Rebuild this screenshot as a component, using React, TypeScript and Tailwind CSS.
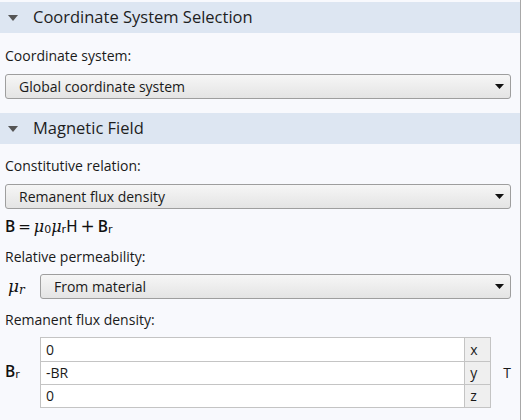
import React from 'react';

const font = { fontFamily: '"Open Sans", "Noto Sans", sans-serif' };
const sans = { fontFamily: '"DejaVu Sans", sans-serif' };
const serif = { fontFamily: '"DejaVu Serif", serif' };

function SectionHeader({ title }: { title: string }) {
    return (
        <div className="h-[31px] bg-[#dde6f2] flex items-center">
            <svg width="10" height="6" viewBox="0 0 10 6" className="ml-[8px] mr-[15px]">
                <path d="M0 0 L10 0 L5 6 Z" fill="#555" />
            </svg>
            <span className="text-[16.5px] text-[#1e1e1e]">{title}</span>
        </div>
    );
}

function Dropdown({ value }: { value: string }) {
    return (
        <div className="h-[25px] flex-1 flex items-center justify-between rounded-[3px] border border-[#9e9e9e] bg-gradient-to-b from-[#f6f6f6] to-[#e4e4e4] pl-[13px] pr-[6px]">
            <span className="text-[14px] text-[#1a1a1a]">{value}</span>
            <svg width="9" height="5" viewBox="0 0 9 5">
                <path d="M0 0 L9 0 L4.5 5 Z" fill="#111" />
            </svg>
        </div>
    );
}

function Label({ text }: { text: string }) {
    return <div className="text-[14px] text-[#1a1a1a] leading-[18px]">{text}</div>;
}

const rows = [
    { v: '0', c: 'x' },
    { v: '-BR', c: 'y' },
    { v: '0', c: 'z' },
];

export default function App() {
    return (
        <div className="w-[523px] h-[420px] bg-white overflow-hidden" style={font}>
            <div className="w-[521px] h-[420px] pt-[2px] border-r border-[#a8a8a8] bg-[#f8f9fd]">
                <SectionHeader title="Coordinate System Selection" />
                <div className="px-[5px] pr-[9px] pt-[14px] pb-[14px]">
                    <Label text="Coordinate system:" />
                    <div className="mt-[9px] flex">
                        <Dropdown value="Global coordinate system" />
                    </div>
                </div>
                <SectionHeader title="Magnetic Field" />
                <div className="px-[5px] pr-[9px] pt-[13px]">
                    <Label text="Constitutive relation:" />
                    <div className="mt-[9px] flex">
                        <Dropdown value="Remanent flux density" />
                    </div>
                    <div className="mt-[6px] h-[24px] flex items-center text-[15px] text-[#111]">
                        <span className="font-semibold text-[15.5px]" style={font}>B</span>
                        <span className="mx-[3px]" style={sans}>=</span>
                        <span className="italic text-[16px]" style={serif}>μ</span>
                        <span className="text-[11px] mt-[6px]" style={sans}>0</span>
                        <span className="italic text-[16px]" style={serif}>μ</span>
                        <span className="text-[11px] mt-[6px]" style={sans}>r</span>
                        <span style={sans}>H</span>
                        <span className="mx-[3px] text-[17px]" style={sans}>+</span>
                        <span className="font-semibold text-[15.5px]" style={font}>B</span>
                        <span className="text-[11px] mt-[6px]" style={sans}>r</span>
                    </div>
                    <div className="mt-[9px]">
                        <Label text="Relative permeability:" />
                    </div>
                    <div className="mt-[8px] flex items-center">
                        <div className="w-[35px] flex items-center text-[#111]">
                            <span className="italic text-[17px] ml-[3px]" style={serif}>μ</span>
                            <span className="italic text-[12px] mt-[6px]" style={serif}>r</span>
                        </div>
                        <Dropdown value="From material" />
                    </div>
                    <div className="mt-[11px]">
                        <Label text="Remanent flux density:" />
                    </div>
                    <div className="mt-[8px] flex items-center">
                        <div className="w-[35px] flex items-center text-[#111]">
                            <span className="font-semibold text-[15.5px]" style={font}>B</span>
                            <span className="text-[11px] mt-[6px]" style={sans}>r</span>
                        </div>
                        <div className="w-[452px] border border-[#c4c4c4] bg-white">
                            {rows.map((r, i) => (
                                <div key={r.c} className={`flex h-[23px] ${i > 0 ? 'border-t border-[#c4c4c4]' : ''}`}>
                                    <div className="flex-1 flex items-center pl-[5px] text-[14px] text-[#1a1a1a]">{r.v}</div>
                                    <div className="w-[26px] border-l border-[#c4c4c4] bg-[#efefef] flex items-center pl-[5px] text-[14px] text-[#1a1a1a]">{r.c}</div>
                                </div>
                            ))}
                        </div>
                        <span className="ml-[12px] text-[14px] text-[#1a1a1a]">T</span>
                    </div>
                </div>
            </div>
        </div>
    );
}
